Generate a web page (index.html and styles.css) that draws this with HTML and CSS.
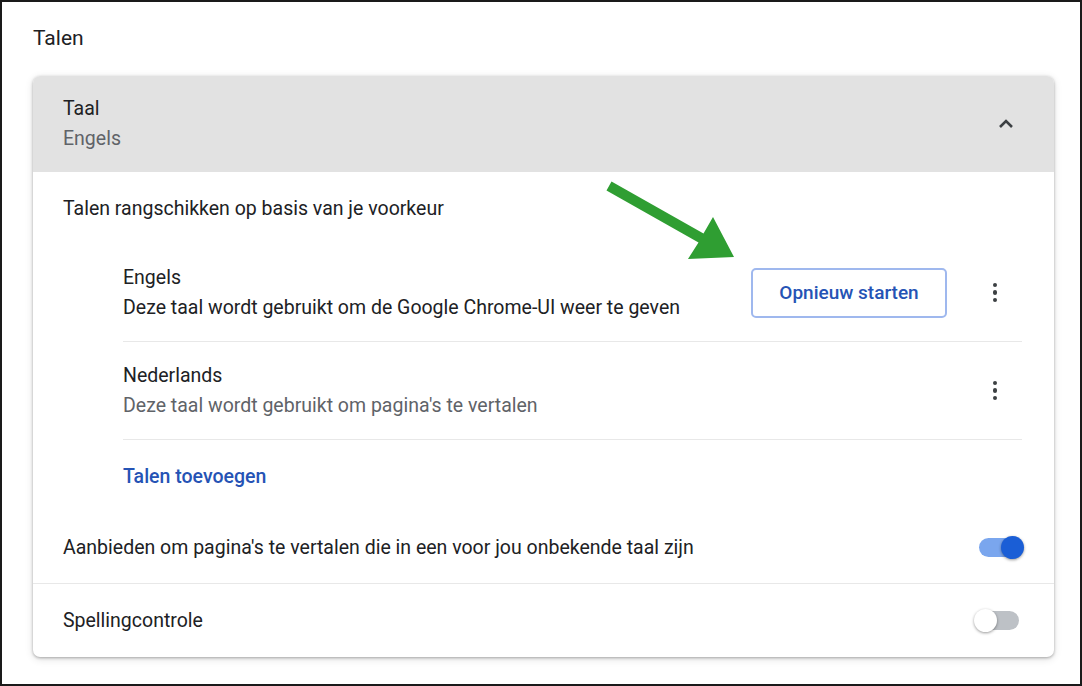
FILE: index.html
```html
<!DOCTYPE html>
<html lang="nl">

<head>
	<meta charset="UTF-8">
	<title>Talen</title>
	<link rel="stylesheet" href="styles.css">
</head>

<body>
	<div class="frame">
		<h2 class="section-title">Talen</h2>

		<div class="card">
			<!-- Header -->
			<div class="card-header">
				<div class="text-block">
					<div class="primary">Taal</div>
					<div class="secondary">Engels</div>
				</div>
				<svg class="chevron" width="24" height="24" viewBox="0 0 24 24">
					<path d="M6 15 L12 9 L18 15" fill="none" stroke="#3c4043" stroke-width="2.6" />
				</svg>
			</div>

			<div class="row intro">Talen rangschikken op basis van je voorkeur</div>

			<div class="lang-list">
				<div class="lang-item">
					<div class="text-block">
						<div class="primary">Engels</div>
						<div class="primary">Deze taal wordt gebruikt om de Google Chrome-UI weer te geven</div>
					</div>
					<button class="restart">Opnieuw starten</button>
					<div class="kebab"><span></span><span></span><span></span></div>
				</div>
				<div class="lang-item">
					<div class="text-block">
						<div class="primary">Nederlands</div>
						<div class="secondary">Deze taal wordt gebruikt om pagina's te vertalen</div>
					</div>
					<div class="kebab"><span></span><span></span><span></span></div>
				</div>
				<div class="add-lang">Talen toevoegen</div>
			</div>

			<div class="row toggle-row">
				<span>Aanbieden om pagina's te vertalen die in een voor jou onbekende taal zijn</span>
				<div class="toggle on"><div class="knob"></div></div>
			</div>

			<div class="row toggle-row bordered">
				<span>Spellingcontrole</span>
				<div class="toggle"><div class="knob"></div></div>
			</div>
		</div>

		<!-- annotation arrow -->
		<svg class="arrow" width="145" height="90" viewBox="600 178 145 90">
			<polygon points="606.5,190.4 611.5,181.6 703.5,233.6 713,217 734,257 688,259 698.5,242.4" fill="#2f9e32" />
		</svg>
	</div>
</body>

</html>
```

FILE: styles.css
```css
body {
	margin: 0;
	font-family: Roboto, "Liberation Sans", sans-serif;
	color: #202124;
	background: #fff;
}

.frame {
	position: relative;
	width: 1082px;
	height: 686px;
	box-sizing: border-box;
	border: 2px solid #1a1a1a;
	padding: 0 26px 0 31px;
}

.section-title {
	margin: 0;
	padding: 22px 0 0 0;
	height: 74px;
	box-sizing: border-box;
	font-size: 21px;
	font-weight: 400;
	line-height: 28px;
}

/* Card */
.card {
	border-radius: 7px;
	overflow: hidden;
	background: #fff;
	box-shadow: 0 1px 3px rgba(0, 0, 0, 0.3), 0 2px 8px rgba(0, 0, 0, 0.12);
}

.card-header {
	display: flex;
	align-items: center;
	justify-content: space-between;
	height: 96px;
	padding: 0 36px 0 30px;
	background: #e2e2e2;
}

.text-block {
	font-size: 19.5px;
	line-height: 30px;
}

.secondary {
	color: #5f6368;
}

.row {
	display: flex;
	align-items: center;
	justify-content: space-between;
	padding: 0 30px;
	font-size: 19.5px;
}

.intro {
	height: 72px;
}

.lang-list {
	margin: 0 32px 0 90px;
}

.lang-item {
	display: flex;
	align-items: center;
	height: 97px;
	border-bottom: 1px solid #e8e8e8;
}

.lang-item .text-block {
	flex: 1;
}

.restart {
	width: 196px;
	height: 50px;
	margin-right: 36px;
	border: 2px solid #9fb8ee;
	border-radius: 5px;
	background: #fff;
	color: #2553b5;
	font-family: Roboto, "Liberation Sans", sans-serif;
	font-size: 19px;
	font-weight: 500;
}

.kebab {
	display: flex;
	flex-direction: column;
	align-items: center;
	gap: 3px;
	width: 24px;
	margin-right: 15px;
}

.kebab span {
	width: 4.5px;
	height: 4.5px;
	border-radius: 50%;
	background: #3c4043;
}

.add-lang {
	height: 72px;
	display: flex;
	align-items: center;
	color: #2553b5;
	font-size: 19.5px;
	font-weight: 500;
}

.toggle-row {
	height: 71px;
}

.toggle-row.bordered {
	height: 73px;
	border-top: 1px solid #e8e8e8;
}

.toggle {
	position: relative;
	width: 40px;
	height: 19px;
	margin-right: 5px;
	border-radius: 10px;
	background: #bdc1c6;
}

.toggle .knob {
	position: absolute;
	top: -2px;
	left: -5px;
	width: 23px;
	height: 23px;
	border-radius: 50%;
	background: #fff;
	box-shadow: 0 1px 3px rgba(0, 0, 0, 0.4);
}

.toggle.on {
	background: #7aa6ee;
}

.toggle.on .knob {
	left: 22px;
	background: #1a5ed6;
}

.arrow {
	position: absolute;
	left: 598px;
	top: 176px;
}
```
